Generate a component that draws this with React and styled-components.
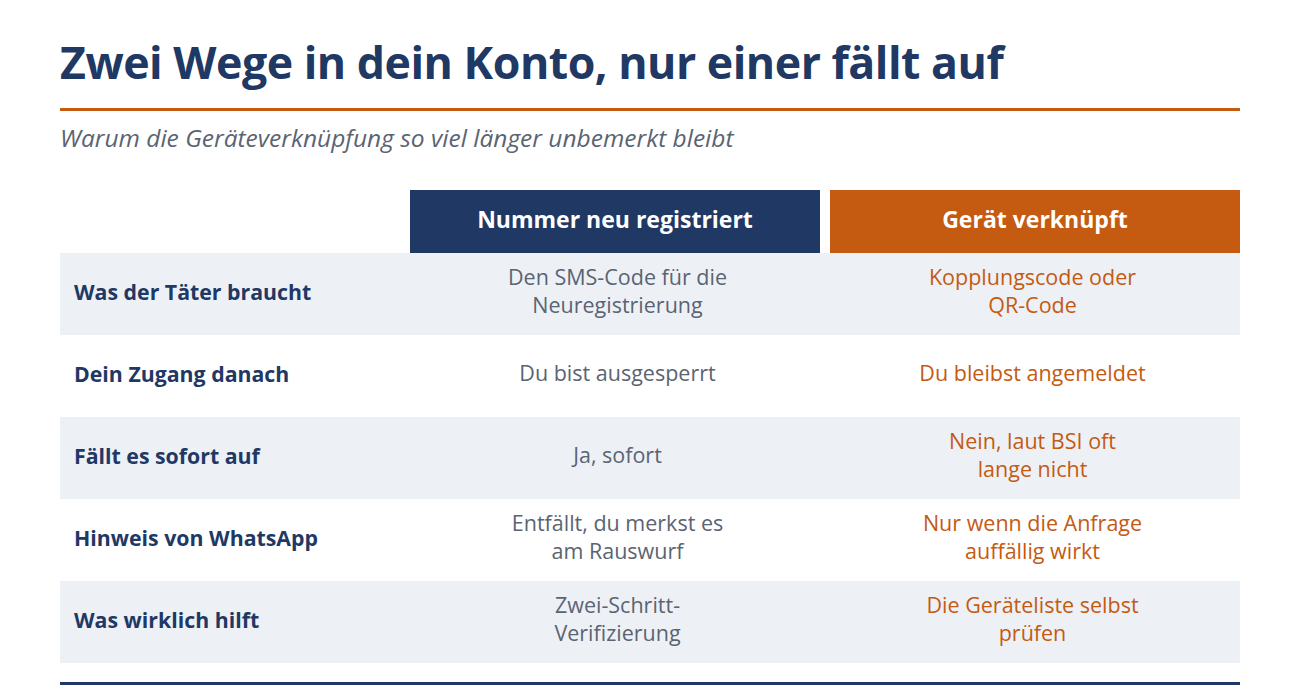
import React from 'react'
import styled, { createGlobalStyle } from 'styled-components'

const GlobalStyle = createGlobalStyle`
    body {
        margin: 0;
        background: #ffffff;
        font-family: "Open Sans", "Noto Sans", sans-serif;
    }
`

const rows = [
    {
        label: 'Was der Täter braucht',
        left: ['Den SMS-Code für die', 'Neuregistrierung'],
        right: ['Kopplungscode oder', 'QR-Code'],
    },
    {
        label: 'Dein Zugang danach',
        left: ['Du bist ausgesperrt'],
        right: ['Du bleibst angemeldet'],
    },
    {
        label: 'Fällt es sofort auf',
        left: ['Ja, sofort'],
        right: ['Nein, laut BSI oft', 'lange nicht'],
    },
    {
        label: 'Hinweis von WhatsApp',
        left: ['Entfällt, du merkst es', 'am Rauswurf'],
        right: ['Nur wenn die Anfrage', 'auffällig wirkt'],
    },
    {
        label: 'Was wirklich hilft',
        left: ['Zwei-Schritt-', 'Verifizierung'],
        right: ['Die Geräteliste selbst', 'prüfen'],
    },
]

const Lines = ({ lines }) =>
    lines.map((line, i) => (
        <React.Fragment key={i}>
            {i > 0 && <br />}
            {line}
        </React.Fragment>
    ))

const App = () => {
    return (
        <Page>
            <GlobalStyle />
            <Title>Zwei Wege in dein Konto, nur einer fällt auf</Title>
            <Subtitle>Warum die Geräteverknüpfung so viel länger unbemerkt bleibt</Subtitle>

            <Table>
                <Corner />
                <HeadCell tone="navy">Nummer neu registriert</HeadCell>
                <HeadCell tone="orange">Gerät verknüpft</HeadCell>

                {rows.map((row, i) => (
                    <Row key={row.label} shaded={i % 2 === 0}>
                        <Label>{row.label}</Label>
                        <Value tone="gray"><Lines lines={row.left} /></Value>
                        <Value tone="orange"><Lines lines={row.right} /></Value>
                    </Row>
                ))}
            </Table>

            <BottomRule />
        </Page>
    )
}

export default App

const navy = '#1f3864'
const orange = '#c55a11'

const Page = styled.div`
    width: 1180px;
    padding: 30px 60px 0 60px;
`

const Title = styled.h1`
    margin: 0;
    padding-bottom: 15px;
    border-bottom: 3px solid ${orange};
    font-size: 44.7px;
    font-weight: 700;
    line-height: 63px;
    color: ${navy};
    letter-spacing: -0.5px;
`

const Subtitle = styled.p`
    margin: 10px 0 0 0;
    font-size: 24.5px;
    font-style: italic;
    line-height: 34px;
    color: #5a6472;
`

const Table = styled.div`
    display: grid;
    grid-template-columns: 350px 1fr 1fr;
    margin-top: 35px;
`

const Corner = styled.div``

const HeadCell = styled.div`
    height: 63px;
    box-sizing: border-box;
    padding-bottom: 6px;
    display: flex;
    align-items: center;
    justify-content: center;
    background: ${p => (p.tone === 'navy' ? navy : orange)};
    margin: ${p => (p.tone === 'navy' ? '0 5px 0 0' : '0 0 0 5px')};
    color: #ffffff;
    font-size: 23px;
    font-weight: 700;
`

const Row = styled.div`
    display: contents;

    & > div {
        background: ${p => (p.shaded ? '#edf1f6' : '#ffffff')};
    }
`

const Label = styled.div`
    height: 82px;
    box-sizing: border-box;
    padding: 0 0 6px 14px;
    display: flex;
    align-items: center;
    font-size: 21.3px;
    font-weight: 700;
    color: ${navy};
`

const Value = styled.div`
    height: 82px;
    box-sizing: border-box;
    padding-bottom: 6px;
    display: flex;
    align-items: center;
    justify-content: center;
    text-align: center;
    font-size: 21.5px;
    line-height: 28px;
    color: ${p => (p.tone === 'orange' ? orange : '#5a6472')};
`

const BottomRule = styled.div`
    margin-top: 19px;
    height: 3px;
    background: ${navy};
`
